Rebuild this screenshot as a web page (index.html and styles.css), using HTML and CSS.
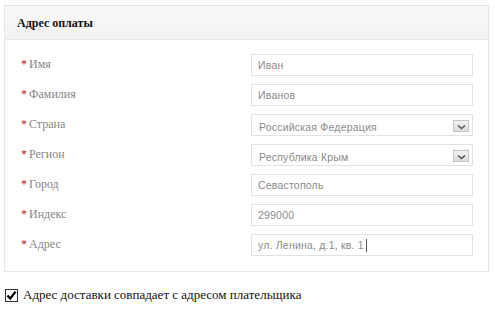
FILE: index.html
```html
<!DOCTYPE html>
<html lang="ru">
<head>
    <meta charset="UTF-8">
    <title>Адрес оплаты</title>
    <link rel="stylesheet" href="styles.css">
</head>
<body>
    <div class="panel">
        <div class="panel-head">Адрес оплаты</div>
        <div class="panel-body">
            <div class="row">
                <label class="label"><span class="req">*</span>Имя</label>
                <input class="field" type="text" value="Иван">
            </div>
            <div class="row">
                <label class="label"><span class="req">*</span>Фамилия</label>
                <input class="field" type="text" value="Иванов">
            </div>
            <div class="row">
                <label class="label"><span class="req">*</span>Страна</label>
                <div class="select">
                    <span class="select-text">Российская Федерация</span>
                    <span class="select-btn">
                        <svg width="9" height="6" viewBox="0 0 9 6"><path d="M1 1.5 L4.5 4.5 L8 1.5" fill="none" stroke="#555" stroke-width="1.6"/></svg>
                    </span>
                </div>
            </div>
            <div class="row">
                <label class="label"><span class="req">*</span>Регион</label>
                <div class="select">
                    <span class="select-text">Республика Крым</span>
                    <span class="select-btn">
                        <svg width="9" height="6" viewBox="0 0 9 6"><path d="M1 1.5 L4.5 4.5 L8 1.5" fill="none" stroke="#555" stroke-width="1.6"/></svg>
                    </span>
                </div>
            </div>
            <div class="row">
                <label class="label"><span class="req">*</span>Город</label>
                <input class="field" type="text" value="Севастополь">
            </div>
            <div class="row">
                <label class="label"><span class="req">*</span>Индекс</label>
                <input class="field" type="text" value="299000">
            </div>
            <div class="row">
                <label class="label"><span class="req">*</span>Адрес</label>
                <div class="field field-active">ул. Ленина, д.1, кв. 1<span class="caret"></span></div>
            </div>
        </div>
    </div>

    <label class="same-address">
        <span class="check">
            <svg width="11" height="11" viewBox="0 0 11 11"><path d="M1.5 5.5 L4.2 8.5 L9.5 1.8" fill="none" stroke="#000" stroke-width="2.2"/></svg>
        </span>
        Адрес доставки совпадает с адресом плательщика
    </label>
</body>
</html>
```

FILE: styles.css
```css
* {
    box-sizing: border-box;
}

body {
    margin: 0;
    padding: 5px 6px 0 4px;
    background-color: #fff;
    font-family: "Liberation Serif", "DejaVu Serif", "Times New Roman", serif;
}

.panel {
    border: 1px solid #e6e6e6;
}

.panel-head {
    height: 34px;
    padding: 10px 0 0 12px;
    font-size: 12px;
    font-weight: bold;
    color: #111;
    background: linear-gradient(#f9f9f9, #f2f2f2);
    border-bottom: 1px solid #e6e6e6;
}

.panel-body {
    padding: 14px 15px 15px 16px;
    display: flex;
    flex-direction: column;
    gap: 8px;
}

.row {
    display: flex;
    align-items: flex-start;
    justify-content: space-between;
    height: 22px;
}

.label {
    font-size: 12px;
    color: #858585;
    padding-top: 3px;
}

.req {
    color: #b01818;
    margin-right: 2px;
}

.field {
    width: 222px;
    height: 22px;
    border: 1px solid #e2e2e2;
    padding: 0 6px;
    font-family: "Liberation Sans", Arial, sans-serif;
    font-size: 10.5px;
    letter-spacing: 0.2px;
    color: #8a8a8a;
    background: #fff;
    outline: none;
}

.field-active {
    display: flex;
    align-items: center;
}

.caret {
    display: inline-block;
    width: 1px;
    height: 13px;
    margin-left: 2px;
    background-color: #555;
}

.select {
    position: relative;
    width: 222px;
    height: 22px;
    border: 1px solid #e2e2e2;
    padding: 6px 0 0 7px;
    font-family: "Liberation Sans", Arial, sans-serif;
    font-size: 10.5px;
    letter-spacing: 0.2px;
    color: #8a8a8a;
}

.select-btn {
    position: absolute;
    right: 3px;
    top: 5px;
    width: 16px;
    height: 12px;
    border: 1px solid #c4c4c4;
    background: linear-gradient(#f2f2f2, #dcdcdc);
    display: flex;
    justify-content: center;
    align-items: flex-end;
    padding-bottom: 1px;
}

.same-address {
    display: flex;
    align-items: center;
    gap: 5px;
    margin: 15px 0 0 1px;
    font-size: 13px;
    color: #111;
}

.check {
    width: 13px;
    height: 13px;
    border: 1px solid #333;
    background: #fff;
    display: flex;
    justify-content: center;
    align-items: center;
}
```
